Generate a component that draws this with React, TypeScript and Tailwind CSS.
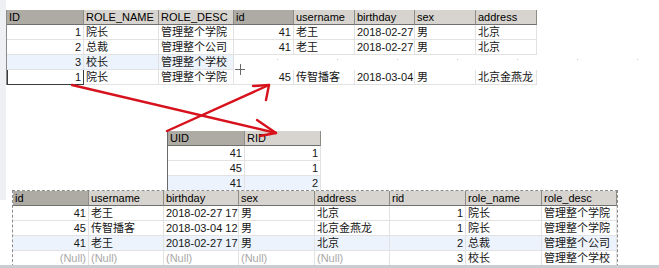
import React from "react";

type Col = { name: string; w: number; right?: boolean };
type Cell = string | { t: string; null?: boolean };

function Table({
  cols,
  rows,
  blueRows = [],
  className = "",
  selected,
}: {
  cols: Col[];
  rows: (Cell[] | null)[];
  blueRows?: number[];
  className?: string;
  selected?: [number, number];
}) {
  return (
    <div className={"flex flex-col " + className}>
      <div className="flex h-[15px]">
        {cols.map((c, i) => (
          <div
            key={i}
            style={{ width: c.w }}
            className={
              "h-[15px] leading-[14px] px-[2px] overflow-hidden whitespace-nowrap border-r border-b border-r-[#8f8c86] border-b-[#6f6f6f] " +
              (i === 0 ? "bg-[#aeaba4]" : "bg-[#d7d4cf]")
            }
          >
            {c.name}
          </div>
        ))}
      </div>
      {rows.map((r, ri) =>
        r === null ? (
          <div key={ri} className="h-[15px]" />
        ) : (
          <div
            key={ri}
            className={"flex h-[15px] " + (blueRows.includes(ri) ? "bg-[#edf3fc]" : "bg-white")}
          >
            {r.map((cell, ci) => {
              const isNull = typeof cell !== "string" && cell.null;
              const t = typeof cell === "string" ? cell : cell.t;
              const sel = selected && selected[0] === ri && selected[1] === ci;
              return (
                <div
                  key={ci}
                  style={{ width: cols[ci].w }}
                  className={
                    "h-[15px] leading-[15px] px-[2px] overflow-hidden whitespace-nowrap border-r border-b " +
                    (sel ? "border-l border-[#3a3a3a] " : "border-[#e2e2e2] ") +
                    (cols[ci].right ? "text-right " : "text-left ") +
                    (isNull ? "text-[#a8a8a8]" : "text-[#161616]")
                  }
                >
                  {t}
                </div>
              );
            })}
          </div>
        )
      )}
    </div>
  );
}

const N = { t: "(Null)", null: true };

export default function App() {
  return (
    <div className="relative w-[659px] h-[268px] overflow-hidden bg-white text-[11px] font-['Liberation_Sans','Noto_Sans_CJK_SC',sans-serif]">
      {/* left faint strip */}
      <div className="absolute left-0 top-0 w-[6px] h-[200px] bg-[#eef0f3]" />

      {/* roles table */}
      <Table
        className="absolute left-[6px] top-[10px] border-l border-[#8a8a8a]"
        cols={[
          { name: "ID", w: 77, right: true },
          { name: "ROLE_NAME", w: 75 },
          { name: "ROLE_DESC", w: 75 },
        ]}
        rows={[
          ["1", "院长", "管理整个学院"],
          ["2", "总裁", "管理整个公司"],
          ["3", "校长", "管理整个学校"],
          ["1", "院长", "管理整个学院"],
        ]}
        blueRows={[2]}
        selected={[3, 0]}
      />

      {/* users table */}
      <Table
        className="absolute left-[234px] top-[10px]"
        cols={[
          { name: "id", w: 60, right: true },
          { name: "username", w: 61 },
          { name: "birthday", w: 60 },
          { name: "sex", w: 61 },
          { name: "address", w: 61 },
        ]}
        rows={[
          ["41", "老王", "2018-02-27 17:47:08", "男", "北京"],
          ["41", "老王", "2018-02-27 17:47:08", "男", "北京"],
          null,
          ["45", "传智播客", "2018-03-04 12:04:06", "男", "北京金燕龙"],
        ]}
      />

      {/* faint dots */}
      {[277, 337, 397, 457, 517, 577, 637].map((x) => (
        <div key={x} className="absolute top-[59px] w-[1px] h-[1px] bg-[#c8c8c8]" style={{ left: x }} />
      ))}

      {/* user_role table */}
      <Table
        className="absolute left-[167px] top-[131px] border-l border-[#6a6a6a]"
        cols={[
          { name: "UID", w: 77, right: true },
          { name: "RID", w: 76, right: true },
        ]}
        rows={[
          ["41", "1"],
          ["45", "1"],
          ["41", "2"],
        ]}
        blueRows={[2]}
      />

      {/* result table */}
      <div className="absolute left-[12px] top-[190px] border border-dashed border-[#8c8c8c] bg-white">
        <Table
          cols={[
            { name: "id", w: 76, right: true },
            { name: "username", w: 75 },
            { name: "birthday", w: 75 },
            { name: "sex", w: 76 },
            { name: "address", w: 75 },
            { name: "rid", w: 76, right: true },
            { name: "role_name", w: 76 },
            { name: "role_desc", w: 75 },
          ]}
          rows={[
            ["41", "老王", "2018-02-27 17:47:08", "男", "北京", "1", "院长", "管理整个学院"],
            ["45", "传智播客", "2018-03-04 12:04:06", "男", "北京金燕龙", "1", "院长", "管理整个学院"],
            ["41", "老王", "2018-02-27 17:47:08", "男", "北京", "2", "总裁", "管理整个公司"],
            [N, N, N, N, N, "3", "校长", "管理整个学校"],
          ]}
          blueRows={[2]}
        />
      </div>

      {/* bottom grey bar */}
      <div className="absolute left-0 bottom-0 w-full h-[3px] bg-[#c9cdd2]" />

      {/* arrows + cursor overlay */}
      <svg className="absolute inset-0 pointer-events-none" width="659" height="268">
        <g stroke="#d7121d" strokeWidth="2.4" fill="none" strokeLinecap="round" strokeLinejoin="round">
          <line x1="72" y1="85" x2="276" y2="133" />
          <polyline points="257,120 276,133 260,136" />
          <line x1="167" y1="131" x2="269" y2="85" />
          <polyline points="253,86 269,85 266,100" />
        </g>
        <g stroke="#6a6a6a" strokeWidth="1">
          <line x1="235" y1="69.5" x2="245" y2="69.5" />
          <line x1="240.5" y1="64" x2="240.5" y2="75" />
        </g>
      </svg>
    </div>
  );
}
